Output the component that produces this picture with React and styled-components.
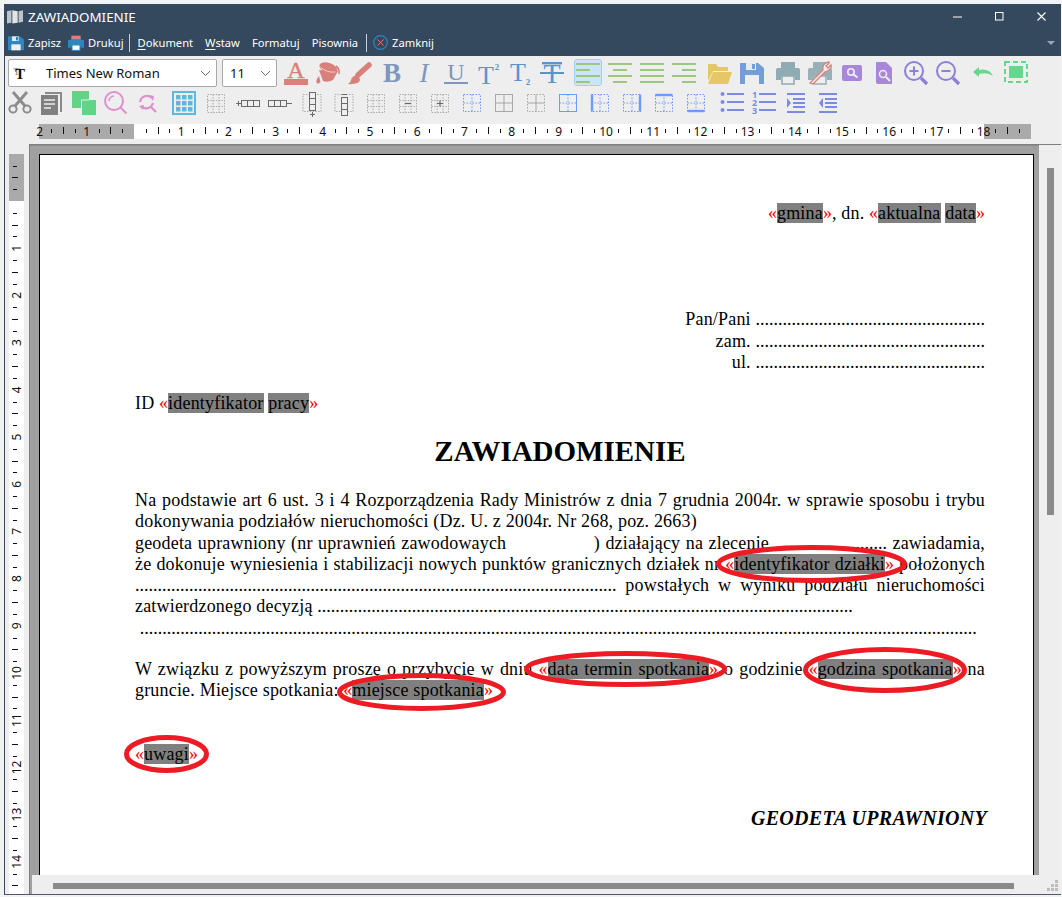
import React from "react";
import styled, { createGlobalStyle } from "styled-components";

const Global = createGlobalStyle`
  html, body { margin: 0; padding: 0; background: #f1f2f3; overflow: hidden; }
  #root { width: 1062px; height: 897px; overflow: hidden; }
  svg { overflow: visible; }
`;
const UI = `"Noto Sans", "Open Sans", sans-serif`;
const SERIF = `"Liberation Serif", "Times New Roman", serif`;

const Win = styled.div`
  width: 1057px; height: 891px; margin: 4px 0 0 4px; display: flex; flex-direction: column;
  border-left: 1px solid #34495e; border-bottom: 1px solid #4a5a6b; background: #eeeeee; box-sizing: border-box;
  font-family: ${UI};
`;
const TitleBar = styled.div`
  height: 25px; background: #34495e; display: flex; align-items: center; color: #fff; padding-left: 2px;
  flex: none;
`;
const TitleText = styled.span`font-size: 13.4px; margin-left: 5px;`;
const WinButtons = styled.div`margin-left: auto; display: flex; margin-right: -1px;`;
const WinBtn = styled.span`width: 42px; height: 25px; display: flex; align-items: center; justify-content: center;`;
const MenuBar = styled.div`
  height: 27px; background: #34495e; display: flex; align-items: center; color: #fff; font-size: 11.2px; padding-left: 3px; flex: none;
`;
const MenuItem = styled.span`
  display: inline-flex; align-items: center; gap: 4px; margin-right: ${p => p.$gap ?? 12}px; white-space: nowrap;
  u { text-underline-offset: 2px; }
`;
const MenuSep = styled.span`width: 1px; height: 18px; background: #c8d0d8; margin: 0 ${p => p.$r ?? 8}px 0 ${p => p.$l ?? 5}px;`;
const MenuArrow = styled.span`
  margin-left: auto; margin-right: 6px; width: 0; height: 0; border-left: 4px solid transparent; border-right: 4px solid transparent;
  border-top: 4px solid #9aa6b2;
`;
const Toolbars = styled.div`height: 68px; padding-top: 2px; box-sizing: border-box; flex: none; background: #eeeeee;`;
const Row = styled.div`
  display: flex; align-items: center; height: ${p => p.$h}px; padding-left: ${p => p.$pl ?? 0}px; margin-left: ${p => p.$ml ?? 0}px;
  margin-top: ${p => p.$mt ?? 0}px;
`;
const Select = styled.div`
  width: ${p => p.$w}px; height: 28px; box-sizing: border-box; background: #fff; border: 1px solid #a8a8a8; border-radius: 2px;
  display: flex; align-items: center; margin-right: ${p => p.$mr}px; font-size: 13px; color: #111; padding-left: ${p => p.$pl}px;
  position: relative; flex: none;
`;
const FontGlyph = styled.svg`position: absolute; left: 4px; top: 6px;`;
const Chevron = styled.svg`position: absolute; right: 5px; top: 10px;`;
const Btn = styled.span`
  flex: none; width: 28px; height: 27px; margin: 0 2px; margin-left: ${p => (p.$wide ? 6 : 2)}px; box-sizing: border-box; border-radius: 3px;
  display: flex; align-items: center; justify-content: center;
  border: 1px solid ${p => (p.$active ? "#99d1ff" : "transparent")};
  background: ${p => (p.$active ? "#cce4f7" : "transparent")};
`;
const RulerRow = styled.div`height: 20px; flex: none; padding-left: 34px; display: flex; align-items: flex-start;`;
const Work = styled.div`flex: 1; min-height: 0; display: flex;`;
const VRulerCol = styled.div`width: 24px; flex: none; padding: 10px 0 0 4px; box-sizing: border-box; overflow: hidden;`;
const Frame = styled.div`
  flex: 1; min-width: 0; display: flex; flex-direction: column; background: #a0a0a0;
  border-top: 1px solid #808080; border-left: 1px solid #808080;
`;
const FrameTop = styled.div`flex: 1; min-height: 0; display: flex;`;
const Viewport = styled.div`flex: 1; min-width: 0; padding: 8px 5px 0 9px; border-top: 1px solid #8c8c8c;`;
const Page = styled.div`
  height: 100%; box-sizing: border-box; background: #fff; border: 1px solid #000; border-bottom: none; overflow: hidden;
  position: relative; padding: 48px 48px 0 95px; font-family: ${SERIF}; font-size: 18px; line-height: 21.3px; color: #000;
  letter-spacing: 0.19px;
`;
const Line = styled.div`
  white-space: pre-wrap; margin-top: ${p => p.$mt ?? 0}px; text-align: ${p => p.$align ?? "left"};
  text-align-last: ${p => p.$align ?? "left"};
`;
const Dots = styled.span`letter-spacing: 0;`;
const Gap = styled.span`display: inline-block; width: ${p => p.$w}px;`;
const Field = styled.span`background: #808080;`;
const Guil = styled.span`color: #f00; letter-spacing: 0;`;
const Heading = styled.div`font-size: 29px; font-weight: bold; text-align: center; line-height: 34px; letter-spacing: 0; margin-top: ${p => p.$mt}px;`;
const Sign = styled.div`font-size: 20px; letter-spacing: 0.28px; font-weight: bold; font-style: italic; text-align: right; margin: ${p => p.$mt}px -2px 0 0;`;
const Ovals = styled.svg`position: absolute; left: 0; top: 0; pointer-events: none;`;
const VScroll = styled.div`width: 22px; flex: none; background: #eeeeee; padding: 23px 0 0 8px; box-sizing: border-box; position: relative;`;
const VThumb = styled.div`width: 7px; height: 347px; background: #8a8a8a;`;
const HScroll = styled.div`
  height: 19px; flex: none; margin-left: 2px; background: #eeeeee; padding: 8px 0 0 21px; box-sizing: border-box; position: relative;
`;
const HThumb = styled.div`width: 961px; height: 6px; background: #8a8a8a;`;
const Grip = styled.svg`position: absolute; right: 2px; bottom: 2px;`;

/* ---------- icons ---------- */
const S = ({ children, w = 24, h = 24, vb }) => (
  <svg width={w} height={h} viewBox={vb || `0 0 ${w} ${h}`}>{children}</svg>
);
const Floppy = ({ c, s = 24 }) => (
  <svg width={s} height={s} viewBox="0 0 24 24">
    <path d="M0 2h18l6 5v16H0z" fill={c} />
    <rect x="6" y="2" width="10" height="7" fill="#eee" opacity=".95" />
    <rect x="12" y="3" width="3" height="5" fill={c} />
    <rect x="5" y="14" width="14" height="9" fill="#eee" />
  </svg>
);
const Printer = ({ c, s = 24, paper = "#eee", top }) => (
  <svg width={s} height={s} viewBox="0 0 24 24">
    <rect x="5" y="1" width="14" height="6" fill={top || c} />
    <path d="M2 7h20q2 0 2 2v10h-5v-3H5v3H0V9q0-2 2-2z" fill={c} />
    <rect x="6" y="15" width="12" height="8" fill={paper} stroke={c} strokeWidth="1.5" />
  </svg>
);
const TextI = ({ t, x = 12, y = 20, size = 26, c, bold, italic }) => (
  <text x={x} y={y} fontFamily={SERIF} fontSize={size} fontWeight={bold ? "bold" : "normal"} fontStyle={italic ? "italic" : "normal"} fill={c} textAnchor="middle">{t}</text>
);
const RED = "#d9807a";
const IconA = () => <S><text x="12" y="17" fontFamily={SERIF} fontSize="24" fill={RED} stroke={RED} strokeWidth=".4" textAnchor="middle">A</text><rect x="0" y="18" width="24" height="6" fill={RED} /></S>;
const Bucket = () => (
  <S>
    <path d="M3 9L7 20Q12 22 17 19L22 10z" fill={RED} />
    <ellipse cx="12.500" cy="7" rx="9.500" ry="5" transform="rotate(20 12.500 7)" fill={RED} />
    <path d="M4.500 6q6 6 15 5" stroke="#eee" strokeWidth="1" fill="none" opacity=".7" />
    <path d="M3 15q-3.500 4-2.500 6.500t4-.5z" fill={RED} />
    <path d="M20 5q4 3 3 8" stroke={RED} strokeWidth="1.600" fill="none" />
  </S>
);
const Brush = () => (
  <S>
    <path d="M21 4L10 14" stroke={RED} strokeWidth="5.500" strokeLinecap="round" />
    <path d="M6 15q4-1 5.500 2t-2 5q-4 1.500-9.500 1 3-2 3-4t3-4z" fill={RED} />
  </S>
);
const BLUEG = "#7f96bd";
const IconB = () => <S><TextI t="B" y={21} size={27} c={BLUEG} bold /></S>;
const IconI = () => <S><TextI t="I" y={21} size={27} c={BLUEG} italic /></S>;
const IconU = () => <S><TextI t="U" y={19} size={24} c={BLUEG} /><rect x="0" y="21" width="24" height="2" fill={BLUEG} /></S>;
const TB = "#5b94cb";
const IconSup = () => <S><TextI t="T" x={10} y={23} size={26} c={TB} /><text x="21" y="9" fontFamily={SERIF} fontWeight="bold" fontSize="9" fill={TB} textAnchor="middle">2</text></S>;
const IconSub = () => <S><TextI t="T" x={10} y={20} size={26} c={TB} /><text x="20" y="24" fontFamily={SERIF} fontWeight="bold" fontSize="9" fill={TB} textAnchor="middle">2</text></S>;
const IconStrike = () => <S><TextI t="T" y={22} size={28} c={TB} /><rect x="0" y="11" width="24" height="2" fill={TB} /><rect x="2" y="1" width="20" height="2.400" fill={TB} /></S>;
const AL = "#9dc77d";
const Align = ({ mode }) => {
  const xs = { left: [[0,24],[0,14],[0,24],[0,14]], center: [[0,24],[5,14],[0,24],[5,14]], just: [[0,24],[0,24],[0,24],[0,24]], right: [[0,24],[10,14],[0,24],[10,14]] }[mode];
  return <S>{xs.map(([x, w], i) => <rect key={i} x={x} y={2 + i * 6} width={w} height="2" fill={AL} />)}</S>;
};
const Folder = () => (
  <S>
    <path d="M0 3h8l2 3h10v4H5L0 20z" fill="#e5c765" />
    <path d="M5 11h19l-4 12H0z" fill="#e5c765" />
  </S>
);
const PrintTool = () => (
  <S>
    <g opacity=".9"><Printer c="#8fabb3" /></g>
    <path d="M2 22L15 9q-1-5 3-7t3 0l-3 3 2 2 3-3q1 3-2 5t-4 2L5 23z" fill="#eee" stroke={RED} strokeWidth="1.300" />
  </S>
);
const PV = "#a886d9";
const Preview = () => (
  <S>
    <rect x="2" y="4" width="20" height="16" rx="2" fill={PV} />
    <circle cx="11" cy="11" r="3.200" fill={PV} stroke="#eee" strokeWidth="1.600" />
    <path d="M13.500 13.500l4 3" stroke="#eee" strokeWidth="2" />
  </S>
);
const DocSearch = () => (
  <S>
    <path d="M4 1h10l6 6v16H6q-2 0-2-2z" fill={PV} />
    <circle cx="11" cy="13" r="3.500" fill={PV} stroke="#eee" strokeWidth="1.600" />
    <path d="M14 16l4 4" stroke="#eee" strokeWidth="2" />
  </S>
);
const ZC = "#8f7fd6";
const Zoom = ({ plus }) => (
  <S>
    <circle cx="10" cy="10" r="9" fill="none" stroke={ZC} strokeWidth="2" />
    <path d="M17 17l6 6" stroke={ZC} strokeWidth="3.400" />
    <path d="M5.500 10h9" stroke={ZC} strokeWidth="2" />
    {plus && <path d="M10 5.500v9" stroke={ZC} strokeWidth="2" />}
  </S>
);
const GR = "#64d98c";
const Undo = () => <S><path d="M1 11l6-5v3q10-2 14 6-5-4-14-2v3z" fill={GR} /></S>;
const SelectAll = () => (
  <S>
    <rect x="1" y="1" width="22" height="20" fill="none" stroke={GR} strokeWidth="2" strokeDasharray="5 3" />
    <rect x="5" y="5" width="14" height="12" fill={GR} />
  </S>
);
const Scissors = () => (
  <svg width="24" height="24" viewBox="0 0 24 24">
    <circle cx="5" cy="18" r="3.600" fill="none" stroke="#8d8d8d" strokeWidth="2" />
    <circle cx="19" cy="18" r="3.600" fill="none" stroke="#8d8d8d" strokeWidth="2" />
    <path d="M7 15L19 1M17 15L5 1" stroke="#8d8d8d" strokeWidth="3" />
  </svg>
);
const CopyDoc = () => (
  <S>
    <path d="M5 1h17v20h-2V3H5z" fill="#8a8a8a" />
    <rect x="1" y="4" width="17" height="20" fill="#808080" />
    <path d="M4 9h11M4 13h11M4 17h7" stroke="#eee" strokeWidth="1.600" />
  </S>
);
const GreenCopy = () => (
  <S><rect x="0" y="0" width="17" height="17" fill="#62d488" /><rect x="10" y="9" width="14" height="15" fill="#62d488" /><path d="M9 17h1M9.500 17V9H17" stroke="#eee" strokeWidth="1" fill="none" /></S>
);
const PK = "#e08fce";
const Search = () => (
  <S><circle cx="10" cy="10" r="9" fill="none" stroke={PK} strokeWidth="2" /><path d="M16.500 16.500l6 6" stroke={PK} strokeWidth="2" /><path d="M5 10a5 5 0 0 1 5-5" stroke={PK} strokeWidth="1.600" fill="none" /></S>
);
const Replace = () => (
  <S>
    <path d="M4 11a7 7 0 0 1 12-4M17 12a7 7 0 0 1-12 3" fill="none" stroke={PK} strokeWidth="2.200" />
    <path d="M13 4l5 1-1 5zM3 15l5-1-1 5z" fill={PK} />
    <path d="M15 16l5 5" stroke={PK} strokeWidth="2.200" />
  </S>
);
const Table = () => (
  <S>
    <rect x="1" y="1" width="22" height="22" fill="none" stroke="#5ab9de" strokeWidth="2" />
    {[0, 1, 2].flatMap(r => [0, 1, 2].map(c => <rect key={`${r}${c}`} x={4 + c * 6} y={4 + r * 6} width="4.500" height="4.500" fill="#5ab9de" />))}
  </S>
);
const DG = { fill: "none", stroke: "#a8a8a8", strokeDasharray: "1.4 1.4", strokeWidth: 1 };
const Dotted = ({ center }) => (
  <S>
    <rect x="3.500" y="3.500" width="17" height="18" {...DG} />
    <path d="M9 3.500v18M15 3.500v18M3.500 9.500h17M3.500 15.500h17" {...DG} />
    {center === "-" && <path d="M9 12.500h6" stroke="#666" strokeWidth="1.200" />}
    {center === "+" && <path d="M9 12.500h6M12 9.500v6" stroke="#666" strokeWidth="1.200" />}
  </S>
);
const INS = { fill: "#eee", stroke: "#6a6a6a", strokeWidth: 1 };
const RowIns = ({ plus }) => {
  const x0 = plus ? 5.5 : 0.5;
  return (
    <S>
      {[0, 6, 12].map(d => <rect key={d} x={x0 + d} y="9.500" width="6" height="6" {...INS} />)}
      {plus ? <path d="M0 12.500h5M2.500 10v5" stroke="#6a6a6a" /> : <path d="M19 12.500h5" stroke="#6a6a6a" />}
    </S>
  );
};
const ColIns = ({ plus }) => (
  <S>
    <path d="M3 3.500h18v17H3z" {...DG} />
    {(plus ? [1.5, 7.5, 13.5] : [6.5, 12.5, 18.5]).map(y => <rect key={y} x="9.500" y={y} width="6" height="6" {...INS} />)}
    {plus ? <path d="M10 23.500h5M12.500 21v5" stroke="#6a6a6a" /> : <path d="M10 3.500h5" stroke="#6a6a6a" />}
  </S>
);
const BL = "#6b9bff";
const Cross = ({ c, outer, inner, side }) => {
  const out = { fill: "none", stroke: c, strokeWidth: 1, strokeDasharray: outer ? undefined : "1.5 1.5" };
  const inn = { fill: "none", stroke: c, strokeWidth: 1, strokeDasharray: inner ? undefined : "1.5 1.5" };
  const t = { left: "M4 3.500v17", right: "M20 3.500v17", top: "M3.500 4h17", bottom: "M3.500 20h17" }[side];
  return (
    <S>
      <rect x="3.500" y="3.500" width="17" height="17" {...out} />
      <path d="M12 3.500v17M3.500 12h17" {...inn} />
      {side && <path d={t} stroke={c} strokeWidth="2.400" />}
    </S>
  );
};
const LI = "#7a8ce0";
const Bullets = () => (
  <S>{[3, 11, 19].map(y => <g key={y}><circle cx="2.500" cy={y} r="2" fill={LI} /><rect x="7" y={y - 1} width="17" height="2" fill={LI} /></g>)}</S>
);
const Numbers = () => (
  <S>{[3, 11, 19].map((y, i) => <g key={y}><text x="2.500" y={y + 3.5} fontSize="9" fontFamily={UI} fontWeight="bold" fill={LI} textAnchor="middle">{i + 1}</text><rect x="7" y={y - 1} width="17" height="2" fill={LI} /></g>)}</S>
);
const Indent = ({ out }) => (
  <S>
    <rect x="3" y="2" width="18" height="2" fill={LI} /><rect x="3" y="20" width="18" height="2" fill={LI} />
    {[7, 11, 15].map(y => <rect key={y} x={9} y={y} width="12" height="2" fill={LI} />)}
    <path d={out ? "M7 7v10l-4-5z" : "M3 7v10l4-5z"} fill={LI} />
  </S>
);

const Ruler = () => {
  const u = 47.2, zero = 95;
  const ticks = [], nums = [];
  for (let i = -8; i <= 75; i++) {
    const x = zero + i * u / 4;
    if (i === 0) continue;
    if (i % 4 === 0) nums.push(<text key={i} x={x} y={12} fontFamily={UI} fontSize="12" textAnchor="middle" fill="#111">{Math.abs(i / 4)}</text>);
    else ticks.push(<rect key={i} x={Math.round(x)} y={i % 2 === 0 ? 3 : 5} width="1" height={i % 2 === 0 ? 7 : 4} fill="#111" />);
  }
  return (
    <svg width="992" height="15" viewBox="0 0 992 15">
      <rect width="992" height="15" fill="#fff" />
      <rect width="95" height="15" fill="#aaa" />
      <rect x="945" width="47" height="15" fill="#aaa" />
      {ticks}{nums}
    </svg>
  );
};
const VRuler = () => {
  const u = 47.2, zero = 47;
  const ticks = [], nums = [];
  for (let i = 0; i <= 58; i++) {
    const y = zero + i * u / 4;
    if (i === 0) continue;
    if (i % 4 === 0) nums.push(<text key={i} transform={`translate(12 ${y}) rotate(-90)`} fontFamily={UI} fontSize="12" textAnchor="middle" fill="#111">{i / 4}</text>);
    else ticks.push(<rect key={i} x={i % 2 === 0 ? 3 : 4} y={Math.round(y)} width={i % 2 === 0 ? 6 : 4} height="1" fill="#111" />);
  }
  for (let i = 1; i <= 3; i++) ticks.push(<rect key={`n${i}`} x={i === 2 ? 3 : 4} y={Math.round(zero - i * u / 4)} width={i === 2 ? 6 : 4} height="1" fill="#111" />);
  return (
    <svg width="15" height="741" viewBox="0 0 15 741" style={{ display: "block" }}>
      <rect width="15" height="741" fill="#fff" />
      <rect width="15" height="47" fill="#aaa" />
      {ticks}{nums}
    </svg>
  );
};

const D = ({ n }) => <Dots>{".".repeat(n)}</Dots>;
const Tag = ({ children }) => (<><Guil>«</Guil><Field>{children}</Field><Guil>»</Guil></>);

const OVALS = [
  [716, 545, 907, 583], [524, 651, 727, 687], [803, 647, 967, 693], [337, 673, 506, 711], [124, 735, 209, 773],
];

export default function App() {
  return (
    <>
      <Global />
      <Win>
        <TitleBar>
          <svg width="16" height="15" viewBox="0 0 18 16">
            <path d="M0 2l5-1v14l-5 1z" fill="#bfc4c9" /><path d="M6 1l6 1v13l-6 1z" fill="#e2e4e6" /><path d="M13 2l5-1v13l-5 1z" fill="#bfc4c9" />
          </svg>
          <TitleText>ZAWIADOMIENIE</TitleText>
          <WinButtons>
            <WinBtn><svg width="9" height="9"><path d="M0 5h9" stroke="#fff" /></svg></WinBtn>
            <WinBtn><svg width="9" height="9"><rect x=".5" y=".5" width="7.5" height="7.5" fill="none" stroke="#fff" /></svg></WinBtn>
            <WinBtn><svg width="9" height="9"><path d="M.5.5l8 8M8.500.5l-8 8" stroke="#fff" strokeWidth="1.100" /></svg></WinBtn>
          </WinButtons>
        </TitleBar>
        <MenuBar>
          <MenuItem $gap={7}><Floppy c="#2e86c1" s={16} />Zapisz</MenuItem>
          <MenuItem $gap={0}><Printer c="#2e86c1" s={16} paper="#fff" top="#d9807a" />Drukuj</MenuItem>
          <MenuSep />
          <MenuItem><span><u>D</u>okument</span></MenuItem>
          <MenuItem><span><u>W</u>staw</span></MenuItem>
          <MenuItem>Formatuj</MenuItem>
          <MenuItem $gap={0}>Pisownia</MenuItem>
          <MenuSep $l={8} $r={6} />
          <MenuItem>
            <svg width="15" height="15" viewBox="0 0 15 15"><circle cx="7.500" cy="7.500" r="6.800" fill="none" stroke="#2e86c1" strokeWidth="1.200" /><path d="M4.500 4.500l6 6M10.500 4.500l-6 6" stroke="#d9807a" /></svg>
            Zamknij
          </MenuItem>
          <MenuArrow />
        </MenuBar>
        <Toolbars>
          <Row $h={29} $pl={3}>
            <Select $w={209} $mr={5} $pl={37}>
              <FontGlyph width="14" height="14" viewBox="0 0 14 14">
                <text x="3.500" y="8.500" fontFamily={SERIF} fontSize="11" fill="#888" textAnchor="middle">T</text>
                <text x="7" y="13" fontFamily={SERIF} fontSize="15" fontWeight="bold" fill="#111" textAnchor="middle">T</text>
              </FontGlyph>
              Times New Roman
              <Chevron width="11" height="7"><path d="M1 1l4.500 4.500L10 1" fill="none" stroke="#666" /></Chevron>
            </Select>
            <Select $w={55} $mr={3} $pl={7}>
              11
              <Chevron width="11" height="7"><path d="M1 1l4.500 4.500L10 1" fill="none" stroke="#666" /></Chevron>
            </Select>
            <Btn><IconA /></Btn><Btn><Bucket /></Btn><Btn><Brush /></Btn><Btn><IconB /></Btn><Btn><IconI /></Btn><Btn><IconU /></Btn>
            <Btn><IconSup /></Btn><Btn><IconSub /></Btn><Btn><IconStrike /></Btn>
            <Btn $wide $active><Align mode="left" /></Btn><Btn><Align mode="center" /></Btn><Btn><Align mode="just" /></Btn><Btn><Align mode="right" /></Btn>
            <Btn $wide><Folder /></Btn><Btn><Floppy c="#749ed8" /></Btn>
            <Btn $wide><Printer c="#8fabb3" /></Btn><Btn><PrintTool /></Btn><Btn><Preview /></Btn><Btn><DocSearch /></Btn>
            <Btn><Zoom plus /></Btn><Btn><Zoom /></Btn>
            <Btn $wide><Undo /></Btn><Btn><SelectAll /></Btn>
          </Row>
          <Row $h={30} $mt={1} $ml={-1}>
            <Btn><Scissors /></Btn><Btn><CopyDoc /></Btn><Btn><GreenCopy /></Btn><Btn><Search /></Btn><Btn><Replace /></Btn>
            <Btn $wide><Table /></Btn>
            <Btn><Dotted /></Btn><Btn><RowIns plus /></Btn><Btn><RowIns /></Btn><Btn><ColIns plus /></Btn><Btn><ColIns /></Btn>
            <Btn><Dotted /></Btn><Btn><Dotted center="-" /></Btn><Btn><Dotted center="+" /></Btn>
            <Btn><Cross c={BL} /></Btn><Btn><Cross c="#a8a8a8" outer inner /></Btn><Btn><Cross c="#a8a8a8" inner /></Btn>
            <Btn><Cross c={BL} outer /></Btn><Btn><Cross c={BL} side="left" /></Btn><Btn><Cross c={BL} side="right" /></Btn><Btn><Cross c={BL} side="top" /></Btn><Btn><Cross c={BL} side="bottom" /></Btn>
            <Btn $wide><Bullets /></Btn><Btn><Numbers /></Btn><Btn><Indent /></Btn><Btn><Indent out /></Btn>
          </Row>
        </Toolbars>
        <RulerRow><Ruler /></RulerRow>
        <Work>
          <VRulerCol><VRuler /></VRulerCol>
          <Frame>
            <FrameTop>
              <Viewport>
                <Page>
                  <Line $align="right"><Guil>«</Guil><Field>gmina</Field><Guil>»</Guil>, dn. <Guil>«</Guil><Field>aktualna</Field> <Field>data</Field><Guil>»</Guil></Line>
                  <Line $align="right" $mt={85}>Pan/Pani <D n={51} /></Line>
                  <Line $align="right">zam. <D n={51} /></Line>
                  <Line $align="right">ul. <D n={51} /></Line>
                  <Line $mt={20}>ID <Guil>«</Guil><Field>identyfikator</Field> <Field>pracy</Field><Guil>»</Guil></Line>
                  <Heading $mt={20}>ZAWIADOMIENIE</Heading>
                  <Line $mt={21.5} $align="justify">Na podstawie art 6 ust. 3 i 4 Rozporządzenia Rady Ministrów z dnia 7 grudnia 2004r. w sprawie sposobu i trybu</Line>
                  <Line>dokonywania podziałów nieruchomości (Dz. U. z 2004r. Nr 268, poz. 2663)</Line>
                  <Line $align="justify">geodeta uprawniony (nr uprawnień zawodowaych <Gap $w={82} />) działający na zlecenie <D n={25} /> zawiadamia,</Line>
                  <Line $align="justify">że dokonuje wyniesienia i stabilizacji nowych punktów granicznych działek nr <Tag>identyfikator działki</Tag> położonych</Line>
                  <Line $align="justify"><D n={107} /> powstałych w wyniku podziału nieruchomości</Line>
                  <Line>zatwierdzonego decyzją <D n={119} /></Line>
                  <Line>{" "}<D n={186} /></Line>
                  <Line $mt={20} $align="justify">W związku z powyższym proszę o przybycie w dniu <Tag>data termin spotkania</Tag> o godzinie <Tag>godzina spotkania</Tag> na</Line>
                  <Line>gruncie. Miejsce spotkania: <Tag>miejsce spotkania</Tag></Line>
                  <Line $mt={42}><Tag>uwagi</Tag></Line>
                  <Sign $mt={43}>GEODETA UPRAWNIONY</Sign>
                  <Ovals width="994" height="740" viewBox="40 155 994 740">
                    {OVALS.map(([x0, y0, x1, y1]) => (
                      <ellipse key={x0} cx={(x0 + x1) / 2} cy={(y0 + y1) / 2} rx={(x1 - x0) / 2 - 2.5} ry={(y1 - y0) / 2 - 2.5} fill="none" stroke="#ed1c24" strokeWidth="5" />
                    ))}
                  </Ovals>
                </Page>
              </Viewport>
              <VScroll><VThumb /></VScroll>
            </FrameTop>
            <HScroll>
              <HThumb />
              <Grip width="12" height="12" viewBox="0 0 12 12">
                {[[8, 0], [4, 4], [8, 4], [0, 8], [4, 8], [8, 8]].map(([x, y]) => <rect key={`${x}${y}`} x={x} y={y} width="3" height="3" fill="#bdbdbd" />)}
              </Grip>
            </HScroll>
          </Frame>
        </Work>
      </Win>
    </>
  );
}
